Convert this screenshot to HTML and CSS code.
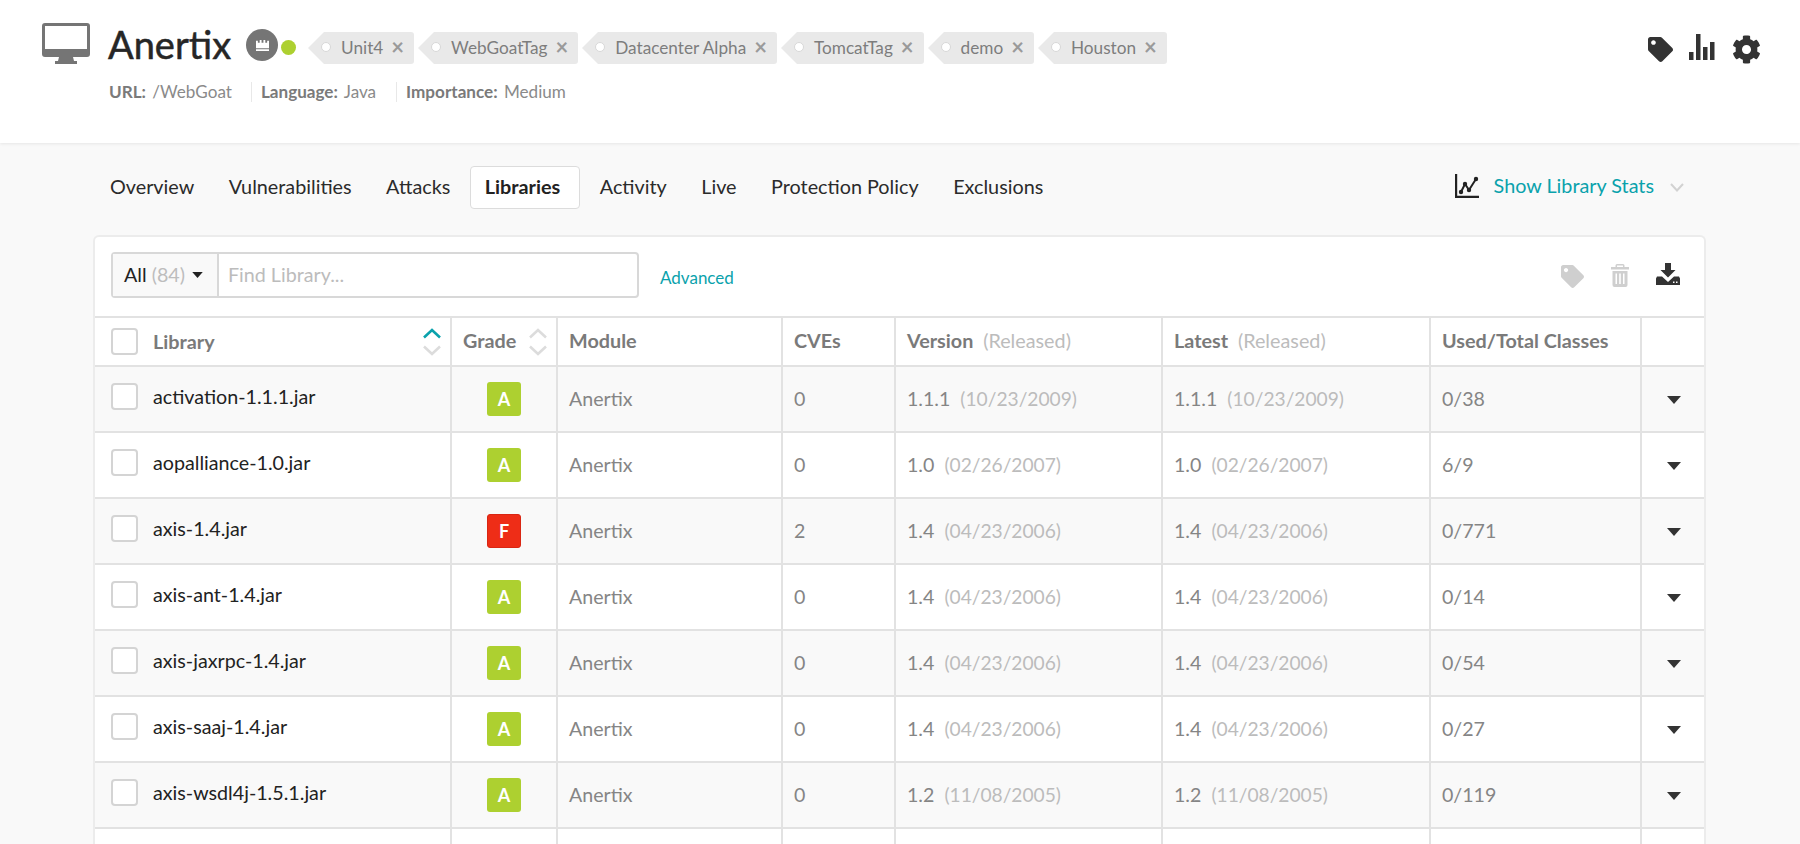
FILE: index.html
```html
<!DOCTYPE html>
<html lang="en">
<head>
<meta charset="utf-8">
<title>Anertix - Libraries</title>
<link rel="stylesheet" href="styles.css">
</head>
<body>
<svg class="sprites" width="0" height="0" aria-hidden="true">
  <symbol id="i-tag" viewBox="0 0 512 512"><path d="M0 252.118V48C0 21.49 21.49 0 48 0h204.118a48 48 0 0 1 33.941 14.059l211.882 211.882c18.745 18.745 18.745 49.137 0 67.882L293.823 497.941c-18.745 18.745-49.137 18.745-67.882 0L14.059 286.059A48 48 0 0 1 0 252.118zM112 64c-26.51 0-48 21.49-48 48s21.49 48 48 48 48-21.49 48-48-21.49-48-48-48z"/></symbol>
  <symbol id="i-up" viewBox="0 0 20 11"><path d="M2 9.500 10 2l8 7.500" fill="none" stroke="currentColor" stroke-width="2.600"/></symbol>
  <symbol id="i-down" viewBox="0 0 20 11"><path d="M2 1.500 10 9l8-7.500" fill="none" stroke="currentColor" stroke-width="2.600"/></symbol>
  <symbol id="i-caret" viewBox="0 0 14 8"><path d="M0 0h14L7 8z"/></symbol>
</svg>

<header class="app-header">
  <svg class="monitor" viewBox="0 0 48 41"><path fill-rule="evenodd" d="M3 0h42a3 3 0 0 1 3 3v28a3 3 0 0 1-3 3H3a3 3 0 0 1-3-3V3a3 3 0 0 1 3-3zm0 3v23h42V3z"/><path d="M17 34h14l1 4h3v3H13v-3h3z"/></svg>
  <div class="app-info">
    <div class="title-row">
      <h1 class="app-name">Anertix</h1>
      <span class="crown"><svg viewBox="0 0 16 14" width="15" height="13"><path d="M1 2h2v2h2V1h2v3h2V1h2v3h2V2h2v8H1zM1 11h14v2H1z"/></svg></span>
      <span class="status-dot"></span>
      <div class="tags">
        <span class="tag">Unit4<span class="tag-x">×</span></span>
        <span class="tag">WebGoatTag<span class="tag-x">×</span></span>
        <span class="tag">Datacenter Alpha<span class="tag-x">×</span></span>
        <span class="tag">TomcatTag<span class="tag-x">×</span></span>
        <span class="tag">demo<span class="tag-x">×</span></span>
        <span class="tag">Houston<span class="tag-x">×</span></span>
      </div>
    </div>
    <div class="meta">
      <span class="meta-item"><b>URL:</b> /WebGoat</span>
      <span class="meta-item"><b>Language:</b> Java</span>
      <span class="meta-item"><b>Importance:</b> Medium</span>
    </div>
  </div>
  <div class="header-actions">
    <svg class="ha-tag"><use href="#i-tag"/></svg>
    <svg class="ha-bars" viewBox="0 0 26 26"><path d="M0 18h4.500v8H0zM7 0h4.500v26H7zM14 13h4.500v13H14zM21 8h4.500v18H21z"/></svg>
    <svg class="ha-gear" viewBox="0 0 512 512"><path d="M487.4 315.7l-42.6-24.6c4.3-23.2 4.3-47 0-70.2l42.6-24.6c4.9-2.8 7.1-8.6 5.5-14-11.1-35.6-30-67.8-54.7-94.6-3.8-4.1-10-5.1-14.8-2.3L380.8 110c-17.9-15.4-38.5-27.3-60.8-35.1V25.8c0-5.6-3.9-10.5-9.4-11.7-36.7-8.2-74.3-7.8-109.2 0-5.5 1.2-9.4 6.1-9.4 11.7V75c-22.2 7.9-42.8 19.8-60.8 35.1L88.7 85.5c-4.9-2.8-11-1.9-14.8 2.3-24.7 26.7-43.6 58.9-54.7 94.6-1.7 5.4.6 11.2 5.5 14L67.3 221c-4.3 23.2-4.3 47 0 70.2l-42.6 24.6c-4.9 2.8-7.1 8.6-5.5 14 11.1 35.6 30 67.8 54.7 94.6 3.8 4.1 10 5.1 14.8 2.3l42.6-24.6c17.9 15.4 38.5 27.3 60.8 35.1v49.2c0 5.6 3.9 10.5 9.4 11.7 36.7 8.2 74.3 7.8 109.2 0 5.5-1.2 9.4-6.1 9.4-11.7v-49.2c22.2-7.9 42.8-19.8 60.8-35.1l42.6 24.6c4.9 2.8 11 1.9 14.8-2.3 24.7-26.7 43.6-58.9 54.7-94.6 1.5-5.5-.7-11.3-5.6-14.1zM256 336c-44.1 0-80-35.9-80-80s35.9-80 80-80 80 35.9 80 80-35.9 80-80 80z"/></svg>
  </div>
</header>

<nav class="tabs">
  <a class="tab">Overview</a>
  <a class="tab">Vulnerabilities</a>
  <a class="tab">Attacks</a>
  <a class="tab tab-active">Libraries</a>
  <a class="tab">Activity</a>
  <a class="tab">Live</a>
  <a class="tab">Protection Policy</a>
  <a class="tab">Exclusions</a>
  <div class="stats-toggle">
    <svg class="stats-icon" viewBox="0 0 24 24"><path d="M1 0v23h23" fill="none" stroke="#222" stroke-width="2.400"/><path d="M6 18l4-8 4 6 7-11" fill="none" stroke="#222" stroke-width="2"/><g fill="#222"><circle cx="6" cy="18" r="2.200"/><circle cx="10" cy="10" r="2.200"/><circle cx="14" cy="16" r="2.200"/><circle cx="21" cy="5" r="2.200"/></g></svg>
    <span class="stats-label">Show Library Stats</span>
    <svg class="stats-chevron" viewBox="0 0 14 9"><path d="M1 1l6 6.500L13 1" fill="none" stroke="#d2d2d2" stroke-width="2"/></svg>
  </div>
</nav>

<main class="card">
  <div class="toolbar">
    <div class="search">
      <div class="search-select">All <span class="count">(84)</span><svg class="search-caret"><use href="#i-caret"/></svg></div>
      <div class="search-input">Find Library...</div>
    </div>
    <a class="advanced">Advanced</a>
    <div class="toolbar-actions">
      <svg class="ta-tag"><use href="#i-tag"/></svg>
      <svg class="ta-trash" viewBox="0 0 18 23"><path fill-rule="evenodd" d="M6 0h6a1.500 1.500 0 0 1 1.500 1.500V3H18v2.500H0V3h4.500V1.500A1.500 1.500 0 0 1 6 0zm0 1.500V3h6V1.500zM1.500 7h15v14a2 2 0 0 1-2 2h-11a2 2 0 0 1-2-2zm3 2.500v10.500H6V9.500zm3.700 0v10.500h1.600V9.500zm3.800 0v10.500h1.500V9.500z"/></svg>
      <svg class="ta-download" viewBox="0 0 24 22"><path d="M9 0h6v7h4.500L12 14.500 4.500 7H9z"/><path fill-rule="evenodd" d="M1 13.500h5l6 5.500 6-5.500h5l1 2V22H0v-6.500zm16 5v1.500h1.500v-1.500zm3 0v1.500h1.500v-1.500z"/></svg>
    </div>
  </div>
  <table class="libs">
    <colgroup>
      <col class="c-lib"><col class="c-grade"><col class="c-mod"><col class="c-cve"><col class="c-ver"><col class="c-ver2"><col class="c-used"><col class="c-act">
    </colgroup>
    <thead>
      <tr>
        <th class="th-lib"><div class="lib-head"><span class="check"></span><span class="lib-title">Library</span><span class="sort"><svg class="sort-on"><use href="#i-up"/></svg><svg><use href="#i-down"/></svg></span></div></th>
        <th><div class="grade-head">Grade<span class="sort"><svg><use href="#i-up"/></svg><svg><use href="#i-down"/></svg></span></div></th>
        <th>Module</th>
        <th>CVEs</th>
        <th>Version <span class="sub">(Released)</span></th>
        <th>Latest <span class="sub">(Released)</span></th>
        <th>Used/Total Classes</th>
        <th></th>
      </tr>
    </thead>
    <tbody>
      <tr><td class="td-lib"><div class="lib-cell"><span class="check"></span><span class="lib-name">activation-1.1.1.jar</span></div></td><td class="td-grade"><span class="grade grade-a">A</span></td><td>Anertix</td><td>0</td><td>1.1.1 <span class="sub">(10/23/2009)</span></td><td>1.1.1 <span class="sub">(10/23/2009)</span></td><td>0/38</td><td class="td-act"><svg class="row-caret"><use href="#i-caret"/></svg></td></tr>
      <tr><td class="td-lib"><div class="lib-cell"><span class="check"></span><span class="lib-name">aopalliance-1.0.jar</span></div></td><td class="td-grade"><span class="grade grade-a">A</span></td><td>Anertix</td><td>0</td><td>1.0 <span class="sub">(02/26/2007)</span></td><td>1.0 <span class="sub">(02/26/2007)</span></td><td>6/9</td><td class="td-act"><svg class="row-caret"><use href="#i-caret"/></svg></td></tr>
      <tr><td class="td-lib"><div class="lib-cell"><span class="check"></span><span class="lib-name">axis-1.4.jar</span></div></td><td class="td-grade"><span class="grade grade-f">F</span></td><td>Anertix</td><td>2</td><td>1.4 <span class="sub">(04/23/2006)</span></td><td>1.4 <span class="sub">(04/23/2006)</span></td><td>0/771</td><td class="td-act"><svg class="row-caret"><use href="#i-caret"/></svg></td></tr>
      <tr><td class="td-lib"><div class="lib-cell"><span class="check"></span><span class="lib-name">axis-ant-1.4.jar</span></div></td><td class="td-grade"><span class="grade grade-a">A</span></td><td>Anertix</td><td>0</td><td>1.4 <span class="sub">(04/23/2006)</span></td><td>1.4 <span class="sub">(04/23/2006)</span></td><td>0/14</td><td class="td-act"><svg class="row-caret"><use href="#i-caret"/></svg></td></tr>
      <tr><td class="td-lib"><div class="lib-cell"><span class="check"></span><span class="lib-name">axis-jaxrpc-1.4.jar</span></div></td><td class="td-grade"><span class="grade grade-a">A</span></td><td>Anertix</td><td>0</td><td>1.4 <span class="sub">(04/23/2006)</span></td><td>1.4 <span class="sub">(04/23/2006)</span></td><td>0/54</td><td class="td-act"><svg class="row-caret"><use href="#i-caret"/></svg></td></tr>
      <tr><td class="td-lib"><div class="lib-cell"><span class="check"></span><span class="lib-name">axis-saaj-1.4.jar</span></div></td><td class="td-grade"><span class="grade grade-a">A</span></td><td>Anertix</td><td>0</td><td>1.4 <span class="sub">(04/23/2006)</span></td><td>1.4 <span class="sub">(04/23/2006)</span></td><td>0/27</td><td class="td-act"><svg class="row-caret"><use href="#i-caret"/></svg></td></tr>
      <tr><td class="td-lib"><div class="lib-cell"><span class="check"></span><span class="lib-name">axis-wsdl4j-1.5.1.jar</span></div></td><td class="td-grade"><span class="grade grade-a">A</span></td><td>Anertix</td><td>0</td><td>1.2 <span class="sub">(11/08/2005)</span></td><td>1.2 <span class="sub">(11/08/2005)</span></td><td>0/119</td><td class="td-act"><svg class="row-caret"><use href="#i-caret"/></svg></td></tr>
      <tr><td></td><td></td><td></td><td></td><td></td><td></td><td></td><td></td></tr>
    </tbody>
  </table>
</main>
</body>
</html>
```

FILE: styles.css
```css
* { box-sizing: border-box; }
html, body { margin: 0; height: 844px; overflow: hidden; }
body { background: #f9f9f9; font-family: Lato, "Open Sans", sans-serif; color: #333; }
.sprites { position: absolute; }

/* header */
.app-header { height: 143px; background: #fff; display: flex; align-items: flex-start; padding: 0 39px 0 42px; box-shadow: 0 1px 3px rgba(0,0,0,.08); position: relative; }
.monitor { width: 48px; height: 41px; fill: #757575; margin-top: 23px; margin-right: 18px; flex: none; }
.app-info { padding-top: 28px; }
.title-row { display: flex; align-items: center; height: 40px; }
.app-name { margin: 0 15px 8px 0; font-size: 38px; line-height: 40px; font-weight: 400; -webkit-text-stroke: .5px #262626; color: #262626; }
.crown { width: 32px; height: 32px; border-radius: 50%; background: #757575; display: flex; align-items: center; justify-content: center; fill: #fff; margin-bottom: 6px; }
.status-dot { width: 15px; height: 15px; border-radius: 50%; background: #add030; margin: 0 12px 2px 3px; }
.tags { display: flex; gap: 4px; }
.tag { position: relative; margin-left: 16px; height: 32px; display: flex; align-items: center; background: #e9e9e9; border-radius: 0 3px 3px 0; padding: 0 10px 2px 17px; font-size: 17.200px; color: #7d7d7d; white-space: nowrap; }
.tag::before { content: ""; position: absolute; left: -16px; top: 0; border-style: solid; border-width: 16px 16px 16px 0; border-color: transparent #e9e9e9 transparent transparent; }
.tag::after { content: ""; position: absolute; left: -3px; top: 10px; width: 8px; height: 8px; border-radius: 50%; background: #fff; border: 1px solid #d8d8d8; }
.tag-x { margin-left: 8px; font-size: 22px; line-height: 22px; font-weight: 700; color: #9a9a9a; }
.meta { display: flex; margin-top: 14px; font-size: 17.100px; line-height: 20px; color: #8a8a8a; }
.meta b { color: #7a7a7a; font-weight: 700; margin-right: 2px; }
.meta-item { padding: 0 20px 0 1px; }
.meta-item:first-child { padding-right: 19px; }
.meta-item + .meta-item { padding-left: 9px; border-left: 1px solid #e8e8e8; }
.header-actions { margin-left: auto; display: flex; align-items: flex-start; fill: #333; }
.ha-tag { width: 25px; height: 25px; margin-top: 37px; }
.ha-bars { width: 26px; height: 26px; margin: 34px 0 0 16px; }
.ha-gear { width: 29px; height: 29px; margin: 35px 0 0 17px; }

/* tabs */
.tabs { display: flex; align-items: center; gap: 4.500px; height: 92px; padding: 23px 116px 26px 95px; font-size: 19.800px; }
.tab { height: 43px; display: flex; align-items: center; padding: 0 14px 3px; border: 1px solid transparent; border-radius: 4px; color: #2b2b2b; }
.tab-active { background: #fff; border-color: #dcdcdc; font-weight: 700; color: #222; padding-right: 19px; }
.stats-toggle { margin-left: auto; margin-bottom: 4px; display: flex; align-items: center; }
.stats-icon { width: 24px; height: 24px; }
.stats-label { margin-left: 15px; margin-top: -2px; color: #0aa2ac; }
.stats-chevron { width: 14px; height: 9px; margin-left: 16px; margin-top: 3px; }

/* card */
.card { margin-left: 93px; width: 1613px; background: #fff; border: 2px solid #ececec; border-bottom: 0; border-radius: 6px 6px 0 0; }
.toolbar { height: 81px; padding: 15px 24px 0 16px; display: flex; align-items: flex-start; border-bottom: 2px solid #e2e2e2; }
.search { display: flex; width: 528px; height: 46px; border: 2px solid #d8d8d8; border-radius: 4px; font-size: 19.700px; }
.search-select { width: 106px; flex: none; display: flex; align-items: center; padding: 0 0 2px 11px; background: #f9f9f9; border-right: 2px solid #d8d8d8; color: #222; white-space: pre; }
.count { color: #bdbdbd; }
.search-caret { width: 11px; height: 6px; margin: 2px 0 0 7px; fill: #222; }
.search-input { flex: 1; display: flex; align-items: center; padding: 0 0 2px 9px; color: #bcbcbc; }
.advanced { margin: 16px 0 0 21px; font-size: 17px; line-height: 20px; color: #0aa2ac; }
.toolbar-actions { margin-left: auto; display: flex; align-items: flex-start; fill: #cfcfcf; }
.ta-tag { width: 23px; height: 23px; margin-top: 13px; }
.ta-trash { width: 18px; height: 23px; margin: 12px 0 0 27px; }
.ta-download { width: 24px; height: 22px; margin: 11px 0 0 27px; fill: #333; }

/* table */
.libs { width: 1609px; table-layout: fixed; border-collapse: separate; border-spacing: 0; font-size: 19.600px; }
.c-lib { width: 357px; }
.c-grade { width: 106px; }
.c-mod { width: 225px; }
.c-cve { width: 113px; }
.c-ver { width: 267px; }
.c-ver2 { width: 268px; }
.c-used { width: 211px; }
.c-act { width: 62px; }
th, td { padding: 0 0 2px 11px; border-right: 2px solid #e2e2e2; border-bottom: 2px solid #e2e2e2; white-space: nowrap; overflow: hidden; }
th { padding-bottom: 3px; }
th:last-child, td:last-child { border-right: 0; }
th { height: 49px; text-align: left; font-weight: 700; font-size: 19.800px; color: #7a7a7a; }
td { height: 66px; color: #858585; }
tbody tr:nth-child(odd) { background: #f9f9f9; }
.sub { font-weight: 400; color: #bcbcbc; margin-left: 5px; }
td .sub { font-size: 19.200px; }
.th-lib, .td-lib { padding: 0 0 0 16px; }
.td-lib { vertical-align: top; }
.lib-head { display: flex; align-items: center; padding-right: 8px; }
.lib-title { margin: 0 0 1px 15px; flex: 1; }
.lib-cell { display: flex; align-items: flex-start; padding-top: 16px; }
.check { width: 27px; height: 27px; flex: none; background: #fff; border: 2px solid #d4d4d4; border-radius: 4px; }
.lib-name { margin: 1px 0 0 15px; line-height: 26px; font-size: 19.700px; color: #222; }
.sort { display: flex; flex-direction: column; gap: 6px; color: #dcdcdc; }
.sort svg { display: block; width: 20px; height: 11px; }
.sort-on { color: #0aa2ac; }
.grade-head { display: flex; align-items: center; }
.grade-head .sort { margin: 3px 0 0 12px; }
.td-grade { padding-bottom: 0; }
.grade { display: flex; align-items: center; justify-content: center; width: 34px; height: 34px; margin: 0 0 0 24px; border-radius: 3px; font-size: 18px; color: #fff; font-weight: 700; }
.grade-a { background: #add030; }
.grade-f { background: #ee2d17; border: 1px solid #d92613; }
.td-act { padding: 2px 0 0 25px; }
.row-caret { display: block; width: 14px; height: 8px; fill: #333; }
```
